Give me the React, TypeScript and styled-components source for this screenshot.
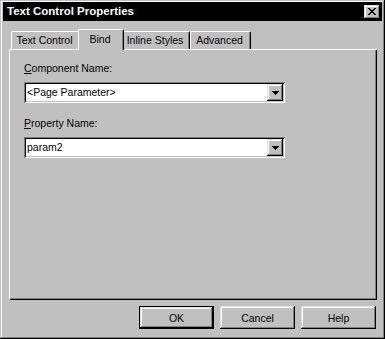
import React from "react";
import styled, { createGlobalStyle } from "styled-components";

const GlobalStyle = createGlobalStyle`
  html, body { margin: 0; padding: 0; background: #c0c0c0; }
  body { font-family: "Liberation Sans", Arial, sans-serif; }
  * { box-sizing: border-box; }
`;

const raised = `
  box-shadow: inset -1px -1px #000, inset 1px 1px #dfdfdf, inset -2px -2px #808080, inset 2px 2px #fff;
`;

const Window = styled.div`
  width: 385px;
  height: 339px;
  background: #c0c0c0;
  padding: 2px 3px 3px 3px;
  box-shadow: inset -1px -1px #000, inset 1px 1px #c0c0c0, inset -2px -2px #808080, inset 2px 2px #fff;
  display: flex;
  flex-direction: column;
`;

const TitleBar = styled.div`
  height: 19px;
  background: #000;
  display: flex;
  align-items: center;
  justify-content: space-between;
  padding: 0 2px 0 4px;
`;

const Title = styled.span`
  color: #fff;
  font-weight: bold;
  font-size: 11.5px;
  line-height: 19px;
  white-space: nowrap;
`;

const CloseButton = styled.div`
  width: 16px;
  height: 14px;
  background: #c0c0c0;
  ${raised}
  display: flex;
  align-items: center;
  justify-content: center;
  padding-right: 1px;
`;

const Body = styled.div`
  flex: 1;
  display: flex;
  flex-direction: column;
  padding: 8px 5px 0 6px;
`;

const TabStrip = styled.div`
  height: 20px;
  display: flex;
  align-items: flex-end;
  padding-left: 2px;
  position: relative;
  z-index: 1;
`;

const Tab = styled.div<{ $w: number; $active?: boolean }>`
  width: ${(p) => (p.$active ? p.$w + 4 : p.$w)}px;
  height: ${(p) => (p.$active ? 21 : 18)}px;
  margin: ${(p) => (p.$active ? "0 -2px -1px -2px" : "0")};
  position: relative;
  z-index: ${(p) => (p.$active ? 2 : 1)};
  background: #c0c0c0;
  border-top: 1px solid #fff;
  border-left: 1px solid #fff;
  border-right: 1px solid #000;
  border-radius: 2px 2px 0 0;
  box-shadow: inset -1px 0 #808080;
  display: flex;
  justify-content: center;
  padding-top: ${(p) => (p.$active ? 3 : 2)}px;
  padding-right: 2px;
  font-size: 10.5px;
  line-height: 13px;
  color: #000;
  white-space: nowrap;
`;

const Panel = styled.div`
  height: 251px;
  background: #c0c0c0;
  box-shadow: inset 1px 1px #fff, inset -1px -1px #000, inset -2px -2px #808080;
  display: flex;
  flex-direction: column;
  padding: 13px 0 0 15px;
`;

const Field = styled.div<{ $first?: boolean }>`
  display: flex;
  flex-direction: column;
  margin-top: ${(p) => (p.$first ? 0 : 14)}px;
`;

const Label = styled.div`
  font-size: 10.5px;
  line-height: 13px;
  color: #000;
  margin-bottom: 7px;
  white-space: nowrap;
`;

const Combo = styled.div`
  width: 261px;
  height: 21px;
  background: #fff;
  padding: 2px;
  box-shadow: inset 1px 1px #808080, inset -1px -1px #fff, inset 2px 2px #000, inset -2px -2px #c0c0c0;
  display: flex;
`;

const ComboText = styled.div`
  flex: 1;
  font-size: 10.5px;
  line-height: 17px;
  padding-left: 1px;
  color: #000;
  white-space: nowrap;
`;

const DropButton = styled.div`
  width: 16px;
  height: 17px;
  background: #c0c0c0;
  ${raised}
  display: flex;
  align-items: center;
  justify-content: center;
  padding-top: 1px;
`;

const ButtonRow = styled.div`
  display: flex;
  justify-content: flex-end;
  gap: 6px;
  margin-top: 6px;
  padding-right: 1px;
`;

const Button = styled.div<{ $default?: boolean }>`
  width: 75px;
  height: 23px;
  background: #c0c0c0;
  border: ${(p) => (p.$default ? "1px solid #000" : "none")};
  ${raised}
  display: flex;
  align-items: center;
  justify-content: center;
  font-size: 10.5px;
  color: #000;
`;

const CloseGlyph = () => (
  <svg width="8" height="7" viewBox="0 0 8 7" shapeRendering="crispEdges">
    <path
      fill="#000"
      d="M0 0h2v1H0z M6 0h2v1H6z M1 1h2v1H1z M5 1h2v1H5z M2 2h4v1H2z M3 3h2v1H3z M2 4h4v1H2z M1 5h2v1H1z M5 5h2v1H5z M0 6h2v1H0z M6 6h2v1H6z"
    />
  </svg>
);

const ArrowGlyph = () => (
  <svg width="7" height="4" viewBox="0 0 7 4" shapeRendering="crispEdges">
    <path fill="#000" d="M0 0h7v1H0z M1 1h5v1H1z M2 2h3v1H2z M3 3h1v1H3z" />
  </svg>
);

export default function App() {
  return (
    <>
      <GlobalStyle />
      <Window>
        <TitleBar>
          <Title>Text Control Properties</Title>
          <CloseButton>
            <CloseGlyph />
          </CloseButton>
        </TitleBar>
        <Body>
          <TabStrip>
            <Tab $w={69}>Text Control</Tab>
            <Tab $w={42} $active>
              Bind
            </Tab>
            <Tab $w={68}>Inline Styles</Tab>
            <Tab $w={61}>Advanced</Tab>
          </TabStrip>
          <Panel>
            <Field $first>
              <Label>
                <u>C</u>omponent Name:
              </Label>
              <Combo>
                <ComboText>&lt;Page Parameter&gt;</ComboText>
                <DropButton>
                  <ArrowGlyph />
                </DropButton>
              </Combo>
            </Field>
            <Field>
              <Label>
                <u>P</u>roperty Name:
              </Label>
              <Combo>
                <ComboText>param2</ComboText>
                <DropButton>
                  <ArrowGlyph />
                </DropButton>
              </Combo>
            </Field>
          </Panel>
          <ButtonRow>
            <Button $default>OK</Button>
            <Button>Cancel</Button>
            <Button>Help</Button>
          </ButtonRow>
        </Body>
      </Window>
    </>
  );
}
